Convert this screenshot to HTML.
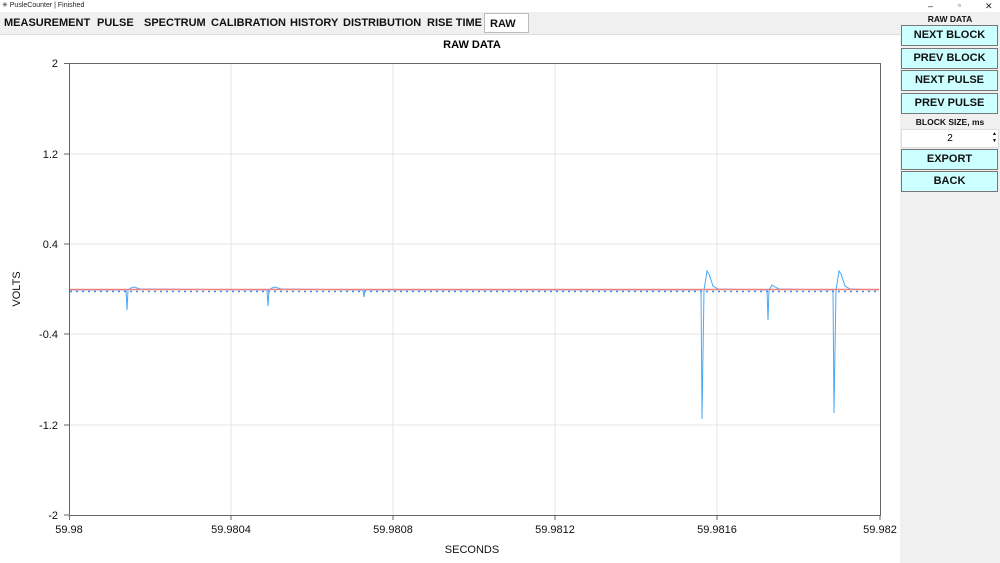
<!DOCTYPE html>
<html><head><style>
body{margin:0;width:1000px;height:563px;overflow:hidden;background:#fff;font-family:"Liberation Sans",sans-serif;position:relative}
.title{position:absolute;left:0;top:0;width:1000px;height:12px;font-size:7px;line-height:12px;color:#222}
.tabs{position:absolute;left:0;top:12px;width:900px;height:22px;background:#f0f0f0;border-bottom:1px solid #ddd}
.tab{position:absolute;top:0;height:22px;line-height:23px;font-size:11px;font-weight:bold;color:#111;white-space:nowrap}
.panel{position:absolute;left:900px;top:12px;width:100px;height:551px;background:#f0f0f0}
.btn{position:absolute;left:1px;width:95px;height:19px;background:#ccffff;border:1px solid #777;text-align:center;font-weight:bold;font-size:11px;line-height:19px;color:#111}
.lbl{position:absolute;left:0;width:100px;text-align:center;font-weight:bold;font-size:8.5px;color:#111}
</style></head><body>
<div class="title">&nbsp;✳ PusleCounter | Finished<span style="position:absolute;left:928px;font-size:9px">–</span><span style="position:absolute;left:958px;font-size:8px">▫</span><span style="position:absolute;left:985px;font-size:9px">✕</span></div>
<div class="tabs">
<span class="tab" style="left:4px">MEASUREMENT</span>
<span class="tab" style="left:97px">PULSE</span>
<span class="tab" style="left:144px">SPECTRUM</span>
<span class="tab" style="left:211px">CALIBRATION</span>
<span class="tab" style="left:290px">HISTORY</span>
<span class="tab" style="left:343px">DISTRIBUTION</span>
<span class="tab" style="left:427px">RISE TIME</span>
<span class="tab" style="left:484px;top:1px;width:45px;height:20px;line-height:20px;background:#fff;border:1px solid #bbb;padding-left:5px;box-sizing:border-box">RAW</span>
</div>
<div class="panel">
<div class="lbl" style="top:2px">RAW DATA</div>
<div class="btn" style="top:13px">NEXT BLOCK</div>
<div class="btn" style="top:36px">PREV BLOCK</div>
<div class="btn" style="top:58px">NEXT PULSE</div>
<div class="btn" style="top:81px">PREV PULSE</div>
<div class="lbl" style="top:105px">BLOCK SIZE, ms</div>
<div style="position:absolute;left:1px;top:117px;width:96px;height:17px;background:#fff;border:1px solid #ddd;font-size:10px;text-align:center;line-height:17px">2<span style="position:absolute;right:1px;top:1px;font-size:5px;line-height:7px">▲<br>▼</span></div>
<div class="btn" style="top:137px">EXPORT</div>
<div class="btn" style="top:159px">BACK</div>
</div>
<svg style="position:absolute;left:0;top:0" width="900" height="563">
<text x="472" y="48" font-size="11" font-weight="bold" text-anchor="middle" font-family="Liberation Sans">RAW DATA</text>
<g stroke="#e4e4e4" stroke-width="1">
<line x1="231" y1="63" x2="231" y2="515"/><line x1="393" y1="63" x2="393" y2="515"/><line x1="555" y1="63" x2="555" y2="515"/><line x1="717" y1="63" x2="717" y2="515"/>
<line x1="69" y1="154" x2="880" y2="154"/><line x1="69" y1="244" x2="880" y2="244"/><line x1="69" y1="334" x2="880" y2="334"/><line x1="69" y1="425" x2="880" y2="425"/>
</g>
<rect x="69.5" y="63.5" width="811" height="452" fill="none" stroke="#666"/>
<g stroke="#666"><line x1="64" y1="63.5" x2="69" y2="63.5"/><line x1="64" y1="154" x2="69" y2="154"/><line x1="64" y1="244" x2="69" y2="244"/><line x1="64" y1="334" x2="69" y2="334"/><line x1="64" y1="425" x2="69" y2="425"/><line x1="64" y1="515" x2="69" y2="515"/>
<line x1="69.5" y1="515" x2="69.5" y2="520"/><line x1="231" y1="515" x2="231" y2="520"/><line x1="393" y1="515" x2="393" y2="520"/><line x1="555" y1="515" x2="555" y2="520"/><line x1="717" y1="515" x2="717" y2="520"/><line x1="880" y1="515" x2="880" y2="520"/></g>
<g font-size="11" font-family="Liberation Sans" text-anchor="end" fill="#111">
<text x="58" y="67">2</text><text x="58" y="158">1.2</text><text x="58" y="248">0.4</text><text x="58" y="338">-0.4</text><text x="58" y="429">-1.2</text><text x="58" y="519">-2</text></g>
<g font-size="11" font-family="Liberation Sans" text-anchor="middle" fill="#111">
<text x="69" y="533">59.98</text><text x="231" y="533">59.9804</text><text x="393" y="533">59.9808</text><text x="555" y="533">59.9812</text><text x="717" y="533">59.9816</text><text x="880" y="533">59.982</text>
<text x="472" y="553">SECONDS</text>
<text x="0" y="0" transform="translate(20,289) rotate(-90)">VOLTS</text></g>
<line x1="70" y1="291.5" x2="879" y2="291.5" stroke="#3a8ee8" stroke-width="1.5" stroke-dasharray="2,4"/>
<polyline fill="none" stroke="#4aa8f5" stroke-width="1" points="70,290 126,290 127,310 128,290 131,288 134,287 140,289 267,290 268,306 269,290 272,288 275,287 281,289 363,290 364,297 365,290 701,290 702,419 704,290 707,271 709,274 713,286 718,289 767,290 768,320 769,290 772,285 775,287 779,289 833,290 834,413 836,290 839,271 841,274 845,286 850,289 879,290"/>
<line x1="70" y1="289.5" x2="879" y2="289.5" stroke="#f08080" stroke-width="1.5"/>
</svg>
</body></html>
